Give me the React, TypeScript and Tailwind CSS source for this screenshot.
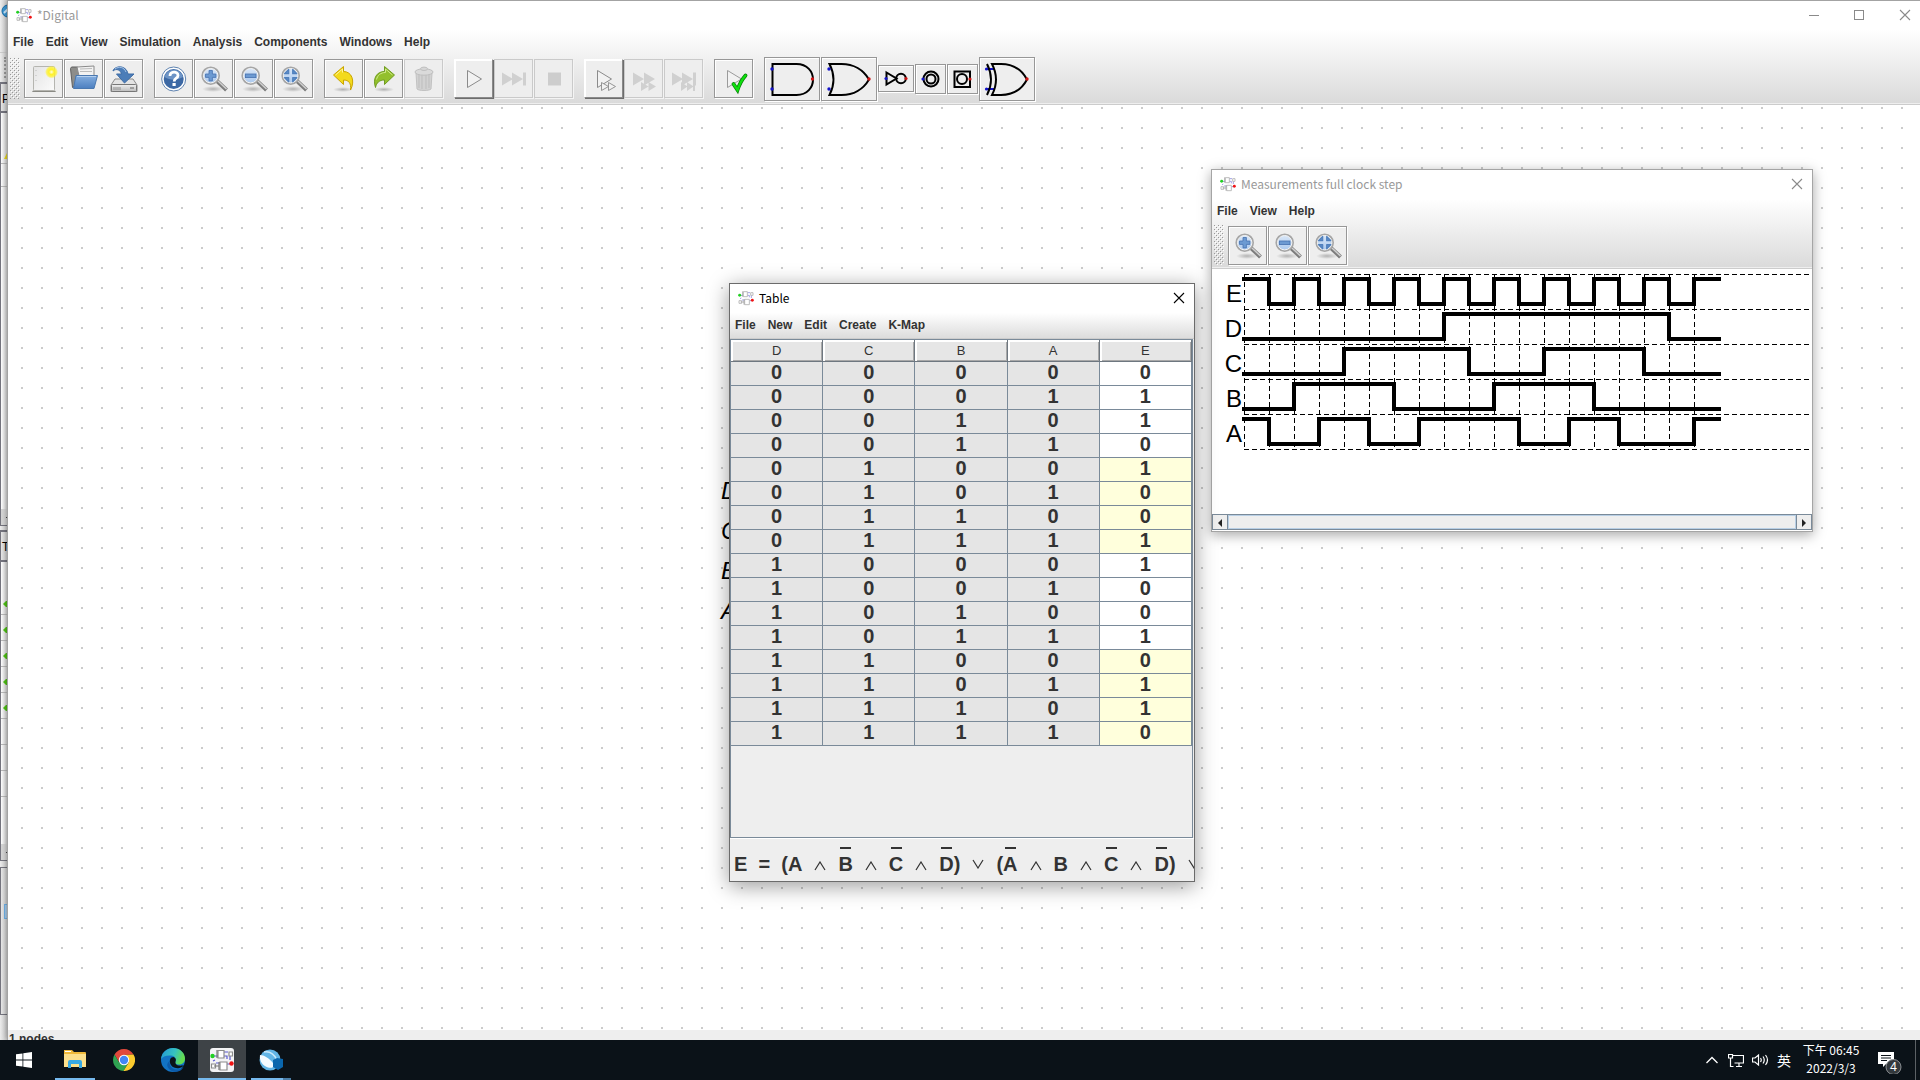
import React from "react";

type Kids = { children?: React.ReactNode };

const UI = "font-['Liberation_Sans',sans-serif]";
const TITLE = "font-['Noto_Sans_CJK_TC','Noto_Sans',sans-serif]";

/* ---------- small drawings ---------- */

function AppIcon({ size, plate }: { size: number; plate?: boolean }) {
  return (
    <svg width={size} height={size} viewBox="0 0 24 24" aria-hidden="true" className="shrink-0">
      {plate && <rect width="24" height="24" rx="3" fill="#f3f3f5" />}
      <g fill="none" strokeWidth="1.200" opacity={plate ? 1 : 0.7}>
        <path d="M3 8h5M14 4h4M14 8h3v3M20 8v4M6 15h5M3 13l2-1M17 16h4M17 19h-3" stroke="#5a5ad0" />
        <path d="M8 2.500h6v7.500h-6zM10 14h7v8h-7zM19 4h3.500v4h-3.500zM1.500 16h4v4h-4z" stroke="#8c8c8c" fill="#fff" />
        <path d="M7 2v8M9 14v8M4 18h5" stroke="#777" />
      </g>
      <circle cx="2.500" cy="8" r="2.200" fill="#22d022" />
      <circle cx="21.500" cy="15.500" r="2.200" fill="#f01414" />
    </svg>
  );
}

function CloseGlyph() {
  return (
    <svg width="12" height="12" viewBox="0 0 12 12" aria-hidden="true" stroke="currentColor" strokeWidth="1.100">
      <path d="M1 1l10 10M11 1L1 11" />
    </svg>
  );
}

function Icon({ children }: Kids) {
  return (
    <svg width="37" height="37" viewBox="1 1 37 37" aria-hidden="true" fill="none">
      {children}
    </svg>
  );
}

function Gradients() {
  return (
    <svg width="0" height="0" className="absolute" aria-hidden="true">
      <defs>
        <linearGradient id="paper" x1="0" y1="0" x2="1" y2="1">
          <stop offset="0" stopColor="#e4e4e4" />
          <stop offset="1" stopColor="#fbfbfb" />
        </linearGradient>
        <radialGradient id="glow">
          <stop offset="0" stopColor="#fffde0" />
          <stop offset="0.400" stopColor="#fff22a" />
          <stop offset="0.750" stopColor="#fff22a" stopOpacity="0.700" />
          <stop offset="1" stopColor="#fff22a" stopOpacity="0" />
        </radialGradient>
        <linearGradient id="folder" x1="0" y1="0" x2="0" y2="1">
          <stop offset="0" stopColor="#86afe0" />
          <stop offset="1" stopColor="#4c7fc0" />
        </linearGradient>
        <linearGradient id="drive" x1="0" y1="0" x2="0" y2="1">
          <stop offset="0" stopColor="#f0f0f0" />
          <stop offset="1" stopColor="#bcbcbc" />
        </linearGradient>
        <radialGradient id="shade">
          <stop offset="0" stopColor="#000" stopOpacity="0.250" />
          <stop offset="1" stopColor="#000" stopOpacity="0" />
        </radialGradient>
        <linearGradient id="lens" x1="0" y1="0" x2="0" y2="1">
          <stop offset="0" stopColor="#dbe8f8" />
          <stop offset="1" stopColor="#a9c8ee" />
        </linearGradient>
        <pattern id="grip" width="4" height="4" patternUnits="userSpaceOnUse">
          <rect width="1" height="1" fill="#999" />
          <rect x="1" y="1" width="1" height="1" fill="#fff" />
          <rect x="2" y="2" width="1" height="1" fill="#999" />
          <rect x="3" y="3" width="1" height="1" fill="#fff" />
        </pattern>
        <pattern id="dots" width="20" height="20" patternUnits="userSpaceOnUse">
          <rect x="13" y="2" width="2" height="2" fill="#cbcbcb" />
        </pattern>
      </defs>
    </svg>
  );
}

const NewIcon = () => (
  <Icon>
    <path d="M9 31.500h22l1 1.500h-24z" fill="#8a8a84" />
    <rect x="9.500" y="7.500" width="21" height="24" rx="1" fill="url(#paper)" stroke="#b5b5b0" />
    <path d="M12 11v1M12 16v1M12 21v1" stroke="#bbb" />
    <circle cx="27.500" cy="13" r="6.500" fill="url(#glow)" />
  </Icon>
);

const OpenIcon = () => (
  <Icon>
    <path d="M6.500 9.500l1-1.500h6l1 1.500h3v18h-7l-2 1z" fill="#8d8d8a" stroke="#5f5f5f" />
    <path d="M13 8l17-1v10h-15z" fill="#f2f2f2" stroke="#8a8a8a" />
    <path d="M16 10l12-.500M16 12.500h12" stroke="#bbb" />
    <path d="M12 16.500h21.500l-3.500 13h-20.500z" fill="url(#folder)" stroke="#4a78b0" />
    <path d="M13 17.500h19" stroke="#b4d0f0" />
  </Icon>
);

const SaveIcon = () => (
  <Icon>
    <path d="M11 20h18l4 6v6.500h-26v-6.500z" fill="#e3e3e3" stroke="#8b8b8b" />
    <rect x="7.500" y="25.500" width="25" height="7" rx="1" fill="url(#drive)" stroke="#777" />
    <path d="M10 28v3M12 28v3M14 28v3M16 28v3" stroke="#8f8f8f" />
    <path d="M26 29h4" stroke="#666" />
    <path d="M9 12c1-5 13-7 15 3h6l-9.500 9-8-9h5c-1-4-5-6-8.500-3z" fill="#4c7db8" stroke="#3f6da6" />
    <path d="M11 10c4-3 9-2 11 3" stroke="#a9c6e8" />
  </Icon>
);

const HelpIcon = () => (
  <Icon>
    <circle cx="19.700" cy="20" r="12" fill="#fff" stroke="#5f83b0" />
    <circle cx="19.700" cy="20" r="10" fill="#3c68a4" />
    <path d="M10.500 18a9.500 9.500 0 0 1 18.500 0c-5 3-12 4-18.500 0z" fill="#6d94c6" />
    <path d="M16 17c0-5 8-5 8-.500 0 3-3.800 2.500-3.800 6" stroke="#fff" strokeWidth="2.800" />
    <rect x="18.500" y="24" width="3.200" height="3" fill="#fff" />
  </Icon>
);

function ZoomIcon({ kind }: { kind: "in" | "out" | "fit" }) {
  return (
    <Icon>
      <ellipse cx="19" cy="30" rx="11" ry="3" fill="url(#shade)" />
      <path d="M23 22l9.500 9" stroke="#7d7d7d" strokeWidth="4" />
      <path d="M24 22l8.500 8" stroke="#d0d0d0" strokeWidth="1.500" />
      <circle cx="16.700" cy="16.700" r="8.200" fill="url(#lens)" stroke="#a6a6a6" strokeWidth="2.200" />
      <circle cx="16.700" cy="16.700" r="7.200" stroke="#f6f6f6" strokeWidth="1" />
      {kind === "in" && (
        <path d="M15 11.500h3.400v3.500h3.500v3.400h-3.500v3.500h-3.400v-3.500h-3.500v-3.400h3.500z" fill="#6c9ad2" stroke="#4672b0" strokeWidth="0.800" />
      )}
      {kind === "out" && <rect x="11.500" y="15" width="10.500" height="3.600" fill="#6c9ad2" stroke="#4672b0" strokeWidth="0.800" />}
      {kind === "fit" && (
        <path
          d="M14.700 10.500v4.200h-4.200zM18.700 10.500v4.200h4.200zM14.700 22.900v-4.200h-4.200zM18.700 22.900v-4.200h4.200z"
          fill="#5b8bc8"
          stroke="#5080bd"
          strokeWidth="1.200"
          strokeLinejoin="round"
        />
      )}
    </Icon>
  );
}

const UndoIcon = () => (
  <Icon>
    <ellipse cx="19" cy="30.500" rx="10" ry="2.500" fill="url(#shade)" />
    <path d="M9.500 16l10-8.500v5c8 0 12 9 7 18.500 1-7-2-10-7-10v4.500z" fill="#f3da1c" stroke="#c9a400" strokeLinejoin="round" />
    <path d="M11.500 16l7-6v3.500" stroke="#fff59a" />
  </Icon>
);

const RedoIcon = () => (
  <Icon>
    <ellipse cx="20" cy="30.500" rx="10" ry="2.500" fill="url(#shade)" />
    <path d="M30.500 16l-10-8.500v5c-8 0-12 7-9 16 1-5 4-7.500 9-7.500v4.500z" fill="#93c02c" stroke="#6f9c22" strokeLinejoin="round" />
    <path d="M28.500 16l-7-6v3.500c-5 0-8 3-9 7" stroke="#d2ea8c" />
  </Icon>
);

const TrashIcon = () => (
  <Icon>
    <path d="M12 14h16l-1 16c-2 2-12 2-14 0z" fill="#d2d2d2" stroke="#c2c2c2" />
    <path d="M15 16v13M18 16v14M22 16v14M25 16v13" stroke="#bdbdbd" />
    <ellipse cx="20" cy="13" rx="9" ry="3.200" fill="#dadada" stroke="#bfbfbf" />
    <ellipse cx="20" cy="9.800" rx="3.500" ry="1.700" fill="#d6d6d6" stroke="#bfbfbf" />
  </Icon>
);

const PlayIcon = () => (
  <Icon>
    <path d="M13.500 11.500l14 8.500-14 8.500z" fill="#f2f2f2" stroke="#8b8b8b" />
  </Icon>
);
const SkipIcon = () => (
  <Icon>
    <path d="M8 13.500l11 6.500-11 6.500zM18 13.500l11 6.500-11 6.500zM29 13.500h3v13h-3z" fill="#d0d0d0" />
  </Icon>
);
const StopIcon = () => (
  <Icon>
    <rect x="14" y="13.500" width="13" height="13" fill="#cdcdcd" />
  </Icon>
);
const MicroStepIcon = () => (
  <Icon>
    <path d="M13.500 11.500l14 8.500-14 8.500z" fill="#f2f2f2" stroke="#8b8b8b" />
    <path d="M17.500 23.500l7 4-7 4zM24.500 23.500l7 4-7 4z" fill="#f2f2f2" stroke="#8b8b8b" strokeWidth="0.900" />
  </Icon>
);
const FastIcon = () => (
  <Icon>
    <path d="M9 13.500l11 6.500-11 6.500zM20 13.500l11 6.500-11 6.500zM17 23l7.500 4.500-7.500 4.500zM24.500 23l7.500 4.500-7.500 4.500z" fill="#d0d0d0" />
  </Icon>
);
const FastEndIcon = () => (
  <Icon>
    <path
      d="M8 13.500l11 6.500-11 6.500zM18 13.500l11 6.500-11 6.500zM29 13.500h3v13h-3zM17 23l6.500 4.500-6.500 4.500zM23 23l6.500 4.500-6.500 4.500zM29 23h2v9h-2z"
      fill="#d0d0d0"
    />
  </Icon>
);
const CheckIcon = () => (
  <Icon>
    <path d="M13.500 11.500l14 8.500-14 8.500z" fill="#f2f2f2" stroke="#9b9b9b" />
    <path d="M19.500 25l4 6c2-6 4-10 8-14.500" stroke="#067a06" strokeWidth="3.800" strokeLinecap="round" />
    <path d="M19.500 25l4 6c2-6 4-10 8-14.500" stroke="#0ee00e" strokeWidth="2.400" strokeLinecap="round" />
  </Icon>
);

const BLUE = "#1414c8";
const RED = "#d01414";

function GateSvg({ w, h, children }: { w: number; h: number } & Kids) {
  return (
    <svg width={w - 2} height={h - 2} viewBox={`1 1 ${w - 2} ${h - 2}`} fill="none" stroke="#000" strokeWidth="2" aria-hidden="true">
      {children}
    </svg>
  );
}
const AndGate = () => (
  <GateSvg w={56} h={44}>
    <path d="M8.500 7h24c22 0 22 31 0 31h-24z" />
    <g stroke="none">
      <circle cx="8" cy="12" r="1.700" fill={BLUE} />
      <circle cx="8" cy="32" r="1.700" fill={BLUE} />
      <circle cx="48.500" cy="22" r="1.700" fill={RED} />
    </g>
  </GateSvg>
);
const OrGate = () => (
  <GateSvg w={56} h={44}>
    <path d="M8.500 7h12c12 0 22 6 27.500 15.500c-5.500 9.500-15.500 15.500-27.500 15.500h-12q8-15.500 0-31z" />
    <g stroke="none">
      <circle cx="8" cy="12" r="1.700" fill={BLUE} />
      <circle cx="8" cy="32" r="1.700" fill={BLUE} />
      <circle cx="48" cy="22" r="1.700" fill={RED} />
    </g>
  </GateSvg>
);
const NotGate = () => (
  <GateSvg w={36} h={27}>
    <path d="M8.500 7.500l10 6-10 6z" />
    <circle cx="23" cy="13.500" r="4.800" />
    <g stroke="none">
      <circle cx="8" cy="13.500" r="1.600" fill={BLUE} />
      <circle cx="28" cy="13.500" r="1.600" fill={RED} />
    </g>
  </GateSvg>
);
const InputGate = () => (
  <GateSvg w={31} h={30}>
    <circle cx="16" cy="15" r="7.500" />
    <circle cx="16" cy="15" r="4.500" />
    <circle cx="8" cy="15" r="1.600" fill={BLUE} stroke="none" />
  </GateSvg>
);
const OutputGate = () => (
  <GateSvg w={31} h={30}>
    <rect x="7.500" y="7.500" width="15.500" height="15.500" />
    <circle cx="15" cy="15" r="5" />
    <circle cx="23" cy="15" r="1.600" fill={RED} stroke="none" />
  </GateSvg>
);
const XorGate = () => (
  <GateSvg w={56} h={44}>
    <path d="M7 12h8M7 32h8" stroke={BLUE} />
    <path d="M8 7q8 15.500 0 31" />
    <path d="M13 7h9c12 0 21 6 26 15.500c-5 9.500-14 15.500-26 15.500h-9q8-15.500 0-31z" />
    <g stroke="none">
      <circle cx="7.500" cy="12" r="1.600" fill={BLUE} />
      <circle cx="7.500" cy="32" r="1.600" fill={BLUE} />
      <circle cx="48" cy="22" r="1.700" fill={RED} />
    </g>
  </GateSvg>
);

/* ---------- shared widgets ---------- */

type Look = "normal" | "off" | "raised";
const looks: Record<Look, string> = {
  normal: "border-[#979797] shadow-[1px_1px_0_#fff,inset_1px_1px_0_#fff]",
  off: "border-[#cacaca] shadow-[1px_1px_0_#f4f4f4]",
  raised:
    "border-t-white border-l-white border-r-[#8a8a8a] border-b-[#8a8a8a] shadow-[1px_1px_0_#6d6d6d,inset_1px_1px_0_#fff]",
};

function ToolButton({ label, look = "normal", size = "size-[39px]", children }: { label: string; look?: Look; size?: string } & Kids) {
  return (
    <button
      type="button"
      aria-label={label}
      title={label}
      disabled={look === "off"}
      className={`flex shrink-0 items-center justify-center border bg-[#eee] ${size} ${looks[look]}`}
    >
      {children}
    </button>
  );
}

const Group = ({ children }: Kids) => <div className="flex items-center gap-px">{children}</div>;

const Grip = () => (
  <svg className="mr-1 w-[10px] shrink-0 self-stretch" height="100%" aria-hidden="true">
    <rect width="10" height="100%" fill="url(#grip)" />
  </svg>
);

function MenuBar({ items }: { items: string[] }) {
  return (
    <nav className="flex h-6 items-center gap-3 px-[5px] text-xs font-bold text-[#333]">
      {items.map((m) => (
        <button key={m} type="button">
          {m}
        </button>
      ))}
    </nav>
  );
}

const ZoomButtons = () => (
  <>
    <ToolButton label="Zoom in">
      <ZoomIcon kind="in" />
    </ToolButton>
    <ToolButton label="Zoom out">
      <ZoomIcon kind="out" />
    </ToolButton>
    <ToolButton label="Fit to window">
      <ZoomIcon kind="fit" />
    </ToolButton>
  </>
);

function Titled({ title, active, children }: { title: string; active?: boolean } & Kids) {
  return (
    <header className="flex h-[29px] items-center bg-white pb-px pl-2">
      <AppIcon size={16} />
      <h2 className={`ml-[5px] flex-1 text-xs ${TITLE} ${active ? "text-black" : "text-[#999]"}`}>{title}</h2>
      {children}
    </header>
  );
}

/* ---------- application behind the main window ---------- */

function BackWindow() {
  return (
    <aside className="flex w-[7px] shrink-0 flex-col overflow-hidden bg-linear-to-r from-[#ececec] to-[#cfcfcf] text-xs text-black">
      <svg width="7" height="52" className="shrink-0" aria-hidden="true">
        <circle cx="8" cy="11" r="6" fill="#3d9ad6" stroke="#1c6ca8" />
        <path d="M4 13l4-4" stroke="#cfeaff" strokeWidth="2" />
      </svg>
      <div className="flex h-[30px] shrink-0 items-center border-t border-[#ccc] pl-1">
        <div className="h-[21px] border-l-2 border-dotted border-[#999]" />
      </div>
      <div className="h-[31px] shrink-0 border-y-2 border-l border-[#75757f] pl-px leading-[30px]">P</div>
      <div className="flex h-[413px] shrink-0 flex-col justify-between border-b border-l border-[#75757f] bg-linear-to-r from-white to-[#d8d8d8]">
        <svg width="6" height="75" aria-hidden="true">
          <path d="M3 46l4-8v8z" fill="#e8d820" />
          <path d="M0 50.500h6M0 73.500h6" stroke="#bbb" />
        </svg>
        <div className="flex h-4 items-center justify-end bg-[#d6d6d6]">
          <span className="size-px bg-[#444]" />
        </div>
      </div>
      <div className="mt-1 h-[32px] shrink-0 border-y-2 border-l border-[#75757f] pl-px leading-[30px]">T</div>
      <div className="flex h-[299px] shrink-0 flex-col border-b border-l border-[#75757f] bg-linear-to-r from-white to-[#d8d8d8] pt-[27px]">
        {[1, 1, 1, 1, 1, 0, 0, 0].map((on, i) => (
          <svg key={i} width="6" height="26" className="shrink-0" aria-hidden="true">
            {on === 1 && <path d="M2 15l3-3h1v6h-1z" fill="#4fc414" />}
            <path d="M0 25.500h6" stroke="#bbb" />
          </svg>
        ))}
        <div className="mt-auto flex h-4 items-center justify-end bg-[#d6d6d6]">
          <span className="size-px bg-[#444]" />
        </div>
      </div>
      <div className="mt-1.5 h-[148px] shrink-0 border-y border-l border-[#75757f] pt-[36px] pl-[3px]">
        <div className="h-[15px] w-2 border border-[#6fb2ea] bg-[#a9cdec]" />
        <div className="mt-2 ml-[3px] h-[8px] border-l border-dotted border-[#555]" />
      </div>
    </aside>
  );
}

/* ---------- truth table ---------- */

const OUT = [0, 1, 1, 0, 1, 0, 0, 1, 1, 0, 0, 1, 0, 1, 1, 0];

function TruthTable() {
  return (
    <table className="w-full table-fixed border-separate border-spacing-0 text-center text-[#333]">
      <thead>
        <tr className="text-[13px]">
          {["D", "C", "B", "A", "E"].map((h) => (
            <th
              key={h}
              scope="col"
              className="h-[22px] border-r border-b border-[#6e7780] bg-[#e6e6e6] p-0 leading-[21px] font-normal shadow-[inset_2px_2px_0_#fff,inset_-1px_-1px_0_#a8a8a8]"
            >
              {h}
            </th>
          ))}
        </tr>
      </thead>
      <tbody>
        {OUT.map((e, i) => (
          <tr key={i} className="text-xl font-bold">
            {[8, 4, 2, 1].map((b) => (
              <td key={b} className="h-6 border-r border-b border-[#7a8a99] bg-[#e5e5e5] p-0 pb-[3px] leading-5">
                {i & b ? 1 : 0}
              </td>
            ))}
            <td
              className={`h-6 border-r border-b border-[#7a8a99] p-0 pb-[3px] leading-5 ${Math.floor(i / 4) % 2 ? "bg-[#ffffdc]" : "bg-white"}`}
            >
              {e}
            </td>
          </tr>
        ))}
      </tbody>
    </table>
  );
}

const Not = ({ children }: Kids) => (
  <span className="flex flex-col items-center">
    <span className="h-0.5 w-[11px] bg-[#333]" />
    <span className="mt-0.5">{children}</span>
  </span>
);
const Plain = ({ children }: Kids) => <span className="mt-1">{children}</span>;
const Op = ({ or }: { or?: boolean }) => (
  <svg
    width="12"
    height="10"
    viewBox="0 0 12 10"
    className={`mx-3 shrink-0 ${or ? "mt-3" : "mt-3.5"}`}
    fill="none"
    stroke="#333"
    strokeWidth="1.200"
    role="img"
    aria-label={or ? "or" : "and"}
  >
    <path d={or ? "M1 1l5 8 5-8" : "M1 9l5-8 5 8"} />
  </svg>
);

function Expression() {
  return (
    <div className="flex h-[42px] items-start overflow-hidden bg-[#eee] pt-2 pl-1 text-xl leading-[26px] font-bold whitespace-nowrap text-[#333]">
      <Plain>E&nbsp;</Plain>
      <Plain>&nbsp;=&nbsp;</Plain>
      <Plain>&nbsp;(A</Plain>
      <Op />
      <Not>B</Not>
      <Op />
      <Not>C</Not>
      <Op />
      <Not>D</Not>
      <Plain>)</Plain>
      <Op or />
      <Plain>(</Plain>
      <Not>A</Not>
      <Op />
      <Plain>B</Plain>
      <Op />
      <Not>C</Not>
      <Op />
      <Not>D</Not>
      <Plain>)</Plain>
      <Op or />
    </div>
  );
}

function TableWindow() {
  return (
    <section className="absolute top-[283px] left-[729px] flex h-[599px] w-[466px] flex-col border border-[#6b6b6b] bg-[#eee] shadow-[0_4px_20px_rgba(0,0,0,0.4)]">
      <Titled title="Table" active>
        <button type="button" aria-label="Close" className="mr-[9px] text-black">
          <CloseGlyph />
        </button>
      </Titled>
      <div className="h-[26px] border-b border-[#ccc] bg-linear-to-b from-white to-[#dcdcdc]">
        <MenuBar items={["File", "New", "Edit", "Create", "K-Map"]} />
      </div>
      <div className="mr-px flex-1 border border-[#7a8a99]">
        <TruthTable />
      </div>
      <div className="border-t border-white">
        <Expression />
      </div>
    </section>
  );
}

/* ---------- measurement graph ---------- */

const SIGNALS: { name: string; start: number; flips: number[] }[] = [
  { name: "E", start: 1, flips: [1, 2, 3, 4, 5, 6, 7, 8, 9, 10, 11, 12, 13, 14, 15, 16, 17, 18] },
  { name: "D", start: 0, flips: [8, 17] },
  { name: "C", start: 0, flips: [4, 9, 12, 16] },
  { name: "B", start: 0, flips: [2, 6, 10, 14] },
  { name: "A", start: 1, flips: [1, 3, 5, 7, 11, 13, 15, 18] },
];

function wave(start: number, flips: number[], row: number) {
  const y = (v: number) => row * 35 + (v ? 10 : 35);
  let v = start;
  let d = `M30 ${y(v)}`;
  for (const f of flips) {
    d += `H${32 + f * 25}`;
    v = 1 - v;
    d += `V${y(v)}`;
  }
  return d + "H509";
}

function WaveGraph() {
  return (
    <svg width="100%" height="245" className={UI} role="img" aria-label="Signal graph of E, D, C, B and A">
      <g stroke="#000" strokeDasharray="5 3" shapeRendering="crispEdges">
        {[0, 1, 2, 3, 4, 5].map((r) => (
          <line key={r} x1="32" x2="598" y1={r * 35 + 5.5} y2={r * 35 + 5.5} />
        ))}
        {Array.from({ length: 19 }, (_, k) => (
          <line key={k} x1={k * 25 + 32.5} x2={k * 25 + 32.5} y1="5" y2="180" />
        ))}
      </g>
      {SIGNALS.map((s, r) => (
        <g key={s.name}>
          <text x="30" y={r * 35 + 33} textAnchor="end" fontSize="24">
            {s.name}
          </text>
          <path d={wave(s.start, s.flips, r)} fill="none" stroke="#000" strokeWidth="4" />
        </g>
      ))}
    </svg>
  );
}

function ScrollArrow({ right }: { right?: boolean }) {
  return (
    <button
      type="button"
      aria-label={right ? "Scroll right" : "Scroll left"}
      className={`flex w-[15px] items-center justify-center bg-[#eee] pt-px ${right ? "border-l" : "border-r"} border-[#7a8a99]`}
    >
      <svg width="4" height="8" viewBox="0 0 4 8" aria-hidden="true">
        <path d={right ? "M0 0l4 4-4 4z" : "M4 0L0 4l4 4z"} fill="#222" />
      </svg>
    </button>
  );
}

function MeasureWindow() {
  return (
    <section className="absolute top-[169px] left-[1211px] w-[602px] border border-[#a5a5a5] bg-white shadow-[0_3px_12px_rgba(0,0,0,0.35)]">
      <Titled title="Measurements full clock step">
        <button type="button" aria-label="Close" className="mr-[9px] text-[#8a8a8a]">
          <CloseGlyph />
        </button>
      </Titled>
      <div className="border-b border-[#ccc] bg-linear-to-b from-white to-[#dadada]">
        <MenuBar items={["File", "View", "Help"]} />
        <div className="flex h-[45px] items-center border-b border-[#eee] py-0.5 pl-0.5">
          <Grip />
          <Group>
            <ZoomButtons />
          </Group>
        </div>
      </div>
      <WaveGraph />
      <div className="mb-px flex h-4 border border-[#7a8a99]">
        <ScrollArrow />
        <div className="flex-1 border border-[#b8cfe5] bg-[#eee]" />
        <ScrollArrow right />
      </div>
    </section>
  );
}

/* ---------- main window ---------- */

function MainToolbar() {
  return (
    <div className="flex h-[50px] items-center gap-[11px] border-b border-[#eee] py-1 pl-0.5">
      <div className="flex items-center self-stretch">
        <Grip />
        <Group>
          <ToolButton label="New">
            <NewIcon />
          </ToolButton>
          <ToolButton label="Open">
            <OpenIcon />
          </ToolButton>
          <ToolButton label="Save">
            <SaveIcon />
          </ToolButton>
        </Group>
      </div>
      <Group>
        <ToolButton label="Help">
          <HelpIcon />
        </ToolButton>
        <ZoomButtons />
      </Group>
      <Group>
        <ToolButton label="Undo">
          <UndoIcon />
        </ToolButton>
        <ToolButton label="Redo">
          <RedoIcon />
        </ToolButton>
        <ToolButton label="Delete" look="off">
          <TrashIcon />
        </ToolButton>
      </Group>
      <Group>
        <ToolButton label="Start simulation" look="raised">
          <PlayIcon />
        </ToolButton>
        <ToolButton label="Run to break" look="off">
          <SkipIcon />
        </ToolButton>
        <ToolButton label="Stop" look="off">
          <StopIcon />
        </ToolButton>
      </Group>
      <Group>
        <ToolButton label="Single gate steps" look="raised">
          <MicroStepIcon />
        </ToolButton>
        <ToolButton label="Gate step" look="off">
          <FastIcon />
        </ToolButton>
        <ToolButton label="Gate steps to break" look="off">
          <FastEndIcon />
        </ToolButton>
      </Group>
      <ToolButton label="Run tests">
        <CheckIcon />
      </ToolButton>
      <Group>
        <ToolButton label="And" size="h-[44px] w-[56px]">
          <AndGate />
        </ToolButton>
        <ToolButton label="Or" size="h-[44px] w-[56px]">
          <OrGate />
        </ToolButton>
        <ToolButton label="Not" size="h-[27px] w-[36px]">
          <NotGate />
        </ToolButton>
        <ToolButton label="Input" size="h-[30px] w-[31px]">
          <InputGate />
        </ToolButton>
        <ToolButton label="Output" size="h-[30px] w-[31px]">
          <OutputGate />
        </ToolButton>
        <ToolButton label="XOr" size="h-[44px] w-[56px]">
          <XorGate />
        </ToolButton>
      </Group>
    </div>
  );
}

function MainWindow() {
  return (
    <main className="flex min-w-0 flex-1 flex-col border-t border-l border-[#a3a3a3] bg-white shadow-[0_0_6px_rgba(0,0,0,0.4)]">
      <Titled title="*Digital">
        <div className="mr-[9px] flex items-center gap-[35px] text-[#8a8a8a]">
          <button type="button" aria-label="Minimize" className="flex h-3 items-center">
            <span className="h-px w-[10px] bg-[#8a8a8a]" />
          </button>
          <button type="button" aria-label="Maximize" className="size-[10px] border border-[#8a8a8a]" />
          <button type="button" aria-label="Close">
            <CloseGlyph />
          </button>
        </div>
      </Titled>
      <div className="border-b border-[#ccc] bg-linear-to-b from-white to-[#dadada]">
        <MenuBar items={["File", "Edit", "View", "Simulation", "Analysis", "Components", "Windows", "Help"]} />
        <MainToolbar />
      </div>
      <svg width="100%" className="min-h-0 flex-1" aria-label="Circuit canvas" role="img">
        <rect width="100%" height="100%" fill="url(#dots)" />
        <g fontSize="24" fontStyle="italic" className={UI}>
          {["D", "C", "B", "A"].map((t, i) => (
            <text key={t} x="713" y={394 + i * 40}>
              {t}
            </text>
          ))}
        </g>
      </svg>
      <footer className="h-[10px] overflow-hidden bg-[#eee] pl-px text-xs leading-[18px] font-bold text-[#333]">1 nodes</footer>
    </main>
  );
}

/* ---------- taskbar ---------- */

function Taskbar() {
  return (
    <footer className="flex h-10 shrink-0 items-stretch justify-between bg-[#0b1218] text-white">
      <div className="flex items-stretch">
        <button type="button" aria-label="Start" className="flex w-12 items-center justify-center">
          <svg width="16" height="16" viewBox="0 0 16 16" fill="#fff" aria-hidden="true">
            <path d="M0 2.300l6.500-.900v6.100H0zM7.300 1.300L16 0v7.500H7.300zM0 8.400h6.500v6.100L0 13.700zM7.300 8.400H16V16l-8.700-1.200z" />
          </svg>
        </button>
        <button type="button" aria-label="File Explorer" className="mx-[7px] flex w-10 items-center justify-center border-b-2 border-[#76b9ed]">
          <svg width="22" height="18" viewBox="0 0 22 18" aria-hidden="true">
            <path d="M0 0h8l2 2h11a1 1 0 0 1 1 1v14H0z" fill="#f0b93a" />
            <path d="M1 1h6v1H1z" fill="#fff" />
            <path d="M0 4h22v13H0z" fill="#fde08c" />
            <path d="M4 18v-6a2 2 0 0 1 2-2h10a2 2 0 0 1 2 2v6h-3v-4H7v4z" fill="#38a9e4" />
          </svg>
        </button>
        <button type="button" aria-label="Chrome" className="flex w-11 items-center justify-center">
          <svg width="22" height="22" viewBox="0 0 22 22" aria-hidden="true">
            <path d="M1.500 5.500A11 11 0 0 1 20.500 5.500L11 6 6.200 13.500z" fill="#e0493c" />
            <path d="M1.500 5.500A11 11 0 0 0 10.500 22L15.500 13.500H6.200z" fill="#2fa351" />
            <path d="M20.500 5.500A11 11 0 0 1 10.500 22L15.700 13.500 11 6z" fill="#fccb2e" />
            <circle cx="11" cy="11" r="5.200" fill="#fff" />
            <circle cx="11" cy="11" r="4.200" fill="#4286f5" />
          </svg>
        </button>
        <button type="button" aria-label="Edge" className="mr-px ml-[3px] flex w-12 items-center justify-center">
          <svg width="24" height="24" viewBox="0 0 24 24" aria-hidden="true">
            <defs>
              <linearGradient id="edgeTop" x1="0" y1="0" x2="1" y2="0.300">
                <stop offset="0" stopColor="#2196d8" />
                <stop offset="0.600" stopColor="#36c2c0" />
                <stop offset="1" stopColor="#64dc50" />
              </linearGradient>
            </defs>
            <circle cx="12" cy="12" r="12" fill="#1273c4" />
            <path d="M0 11C1 4 6 0 12 0c7 0 12 5 12 10.500 0 4-3 6-6.500 6-3 0-4-1.500-3-3 1-2 0-5.500-4.500-6C5 7 1.500 9 0 11z" fill="url(#edgeTop)" />
            <path d="M8.500 13c-.5 6 4 9 9 8.500 2-.3 3.500-1 5-2.500-3 6-10 6-14 2.500-3-3-3-6 0-8.500z" fill="#0c5aa8" />
            <path d="M14.500 13.500c1-2 0-4-2-4.500-3 0-4 3-3.500 5.500.5 4 5 6.500 9.500 5.500 2-.5 3.500-1.500 4.500-3-2 1-9.500 1.500-8.500-3.500z" fill="#0b1218" />
          </svg>
        </button>
        <button type="button" aria-label="Digital" className="flex w-12 items-center justify-center border-b-2 border-[#76b9ed] bg-[#3e4347] pt-0.5">
          <AppIcon size={24} plate />
        </button>
        <button type="button" aria-label="Circuit design suite" className="relative ml-[5px] flex w-10 items-center justify-center">
          <svg width="24" height="24" viewBox="0 0 24 24" aria-hidden="true">
            <circle cx="11" cy="12" r="10.500" fill="#62b5e6" />
            <path d="M1 7c4 0 9 3 13 8v4c-1 1-3 1-5 .5C4 18 0 13 1 7z" fill="#f4fbff" />
            <path d="M5 4c5-1 10 2 13 8" stroke="#c9e8fa" strokeWidth="1.500" fill="none" />
            <path d="M14 12l4-2 6 1v8l-5 3-5-3z" fill="#0a66ad" />
          </svg>
          <span className="absolute inset-x-0 bottom-0 flex h-0.5">
            <span className="w-8 bg-[#76b9ed]" />
            <span className="flex-1 bg-[#4c7fa8]" />
          </span>
        </button>
      </div>
      <div className="flex items-center">
        <button type="button" aria-label="Show hidden icons" className="mr-2.5">
          <svg width="12" height="8" viewBox="0 0 12 8" fill="none" stroke="#fff" strokeWidth="1.300" aria-hidden="true">
            <path d="M.5 7L6 1.500 11.500 7" />
          </svg>
        </button>
        <svg width="16" height="14" viewBox="0 0 16 14" fill="none" stroke="#fff" strokeWidth="1.200" role="img" aria-label="Network">
          <path d="M4.500 2.500h11v7.500h-9M8 13.500h6M11 10v3M.5 1.500h4v3.500h-4zM2.500 5v8.500h3" />
        </svg>
        <svg width="17" height="14" viewBox="0 0 17 14" fill="none" stroke="#fff" strokeWidth="1.200" role="img" aria-label="Volume" className="mx-2">
          <path d="M.5 5v4h2.500l3.500 3V2L3 5zM8.500 5q1.500 2 0 4M11 3.500q2.500 3.500 0 7M13.500 2q4 5 0 10" />
        </svg>
        <span className="w-[14px] text-sm leading-none font-['Noto_Sans_CJK_TC',sans-serif]">英</span>
        <time className={`mr-4 mb-0.5 ml-2.5 w-[60px] text-center text-xs leading-[18px] whitespace-nowrap ${TITLE}`}>
          下午 06:45
          <br />
          2022/3/3
        </time>
        <button type="button" aria-label="4 notifications" className="relative mr-3.5 h-6 w-6">
          <svg width="26" height="26" viewBox="0 0 26 26" aria-hidden="true">
            <path d="M1 4h16v12H9l-3 3v-3H1z" fill="#fff" />
            <path d="M4 7.500h10M4 10h10M4 12.500h6" stroke="#0b1218" />
            <circle cx="16.500" cy="19" r="7.500" fill="#33383c" stroke="#8c9094" />
          </svg>
          <span className="absolute top-3 left-[13px] text-xs leading-[14px] font-['Noto_Sans',sans-serif]">4</span>
        </button>
        <div className="h-full w-[5px] border-l border-[#5c6165]" />
      </div>
    </footer>
  );
}

export default function App() {
  return (
    <div className={`flex h-screen flex-col overflow-hidden ${UI}`}>
      <Gradients />
      <div className="relative flex min-h-0 flex-1 overflow-hidden">
        <BackWindow />
        <MainWindow />
        <MeasureWindow />
        <TableWindow />
      </div>
      <Taskbar />
    </div>
  );
}
